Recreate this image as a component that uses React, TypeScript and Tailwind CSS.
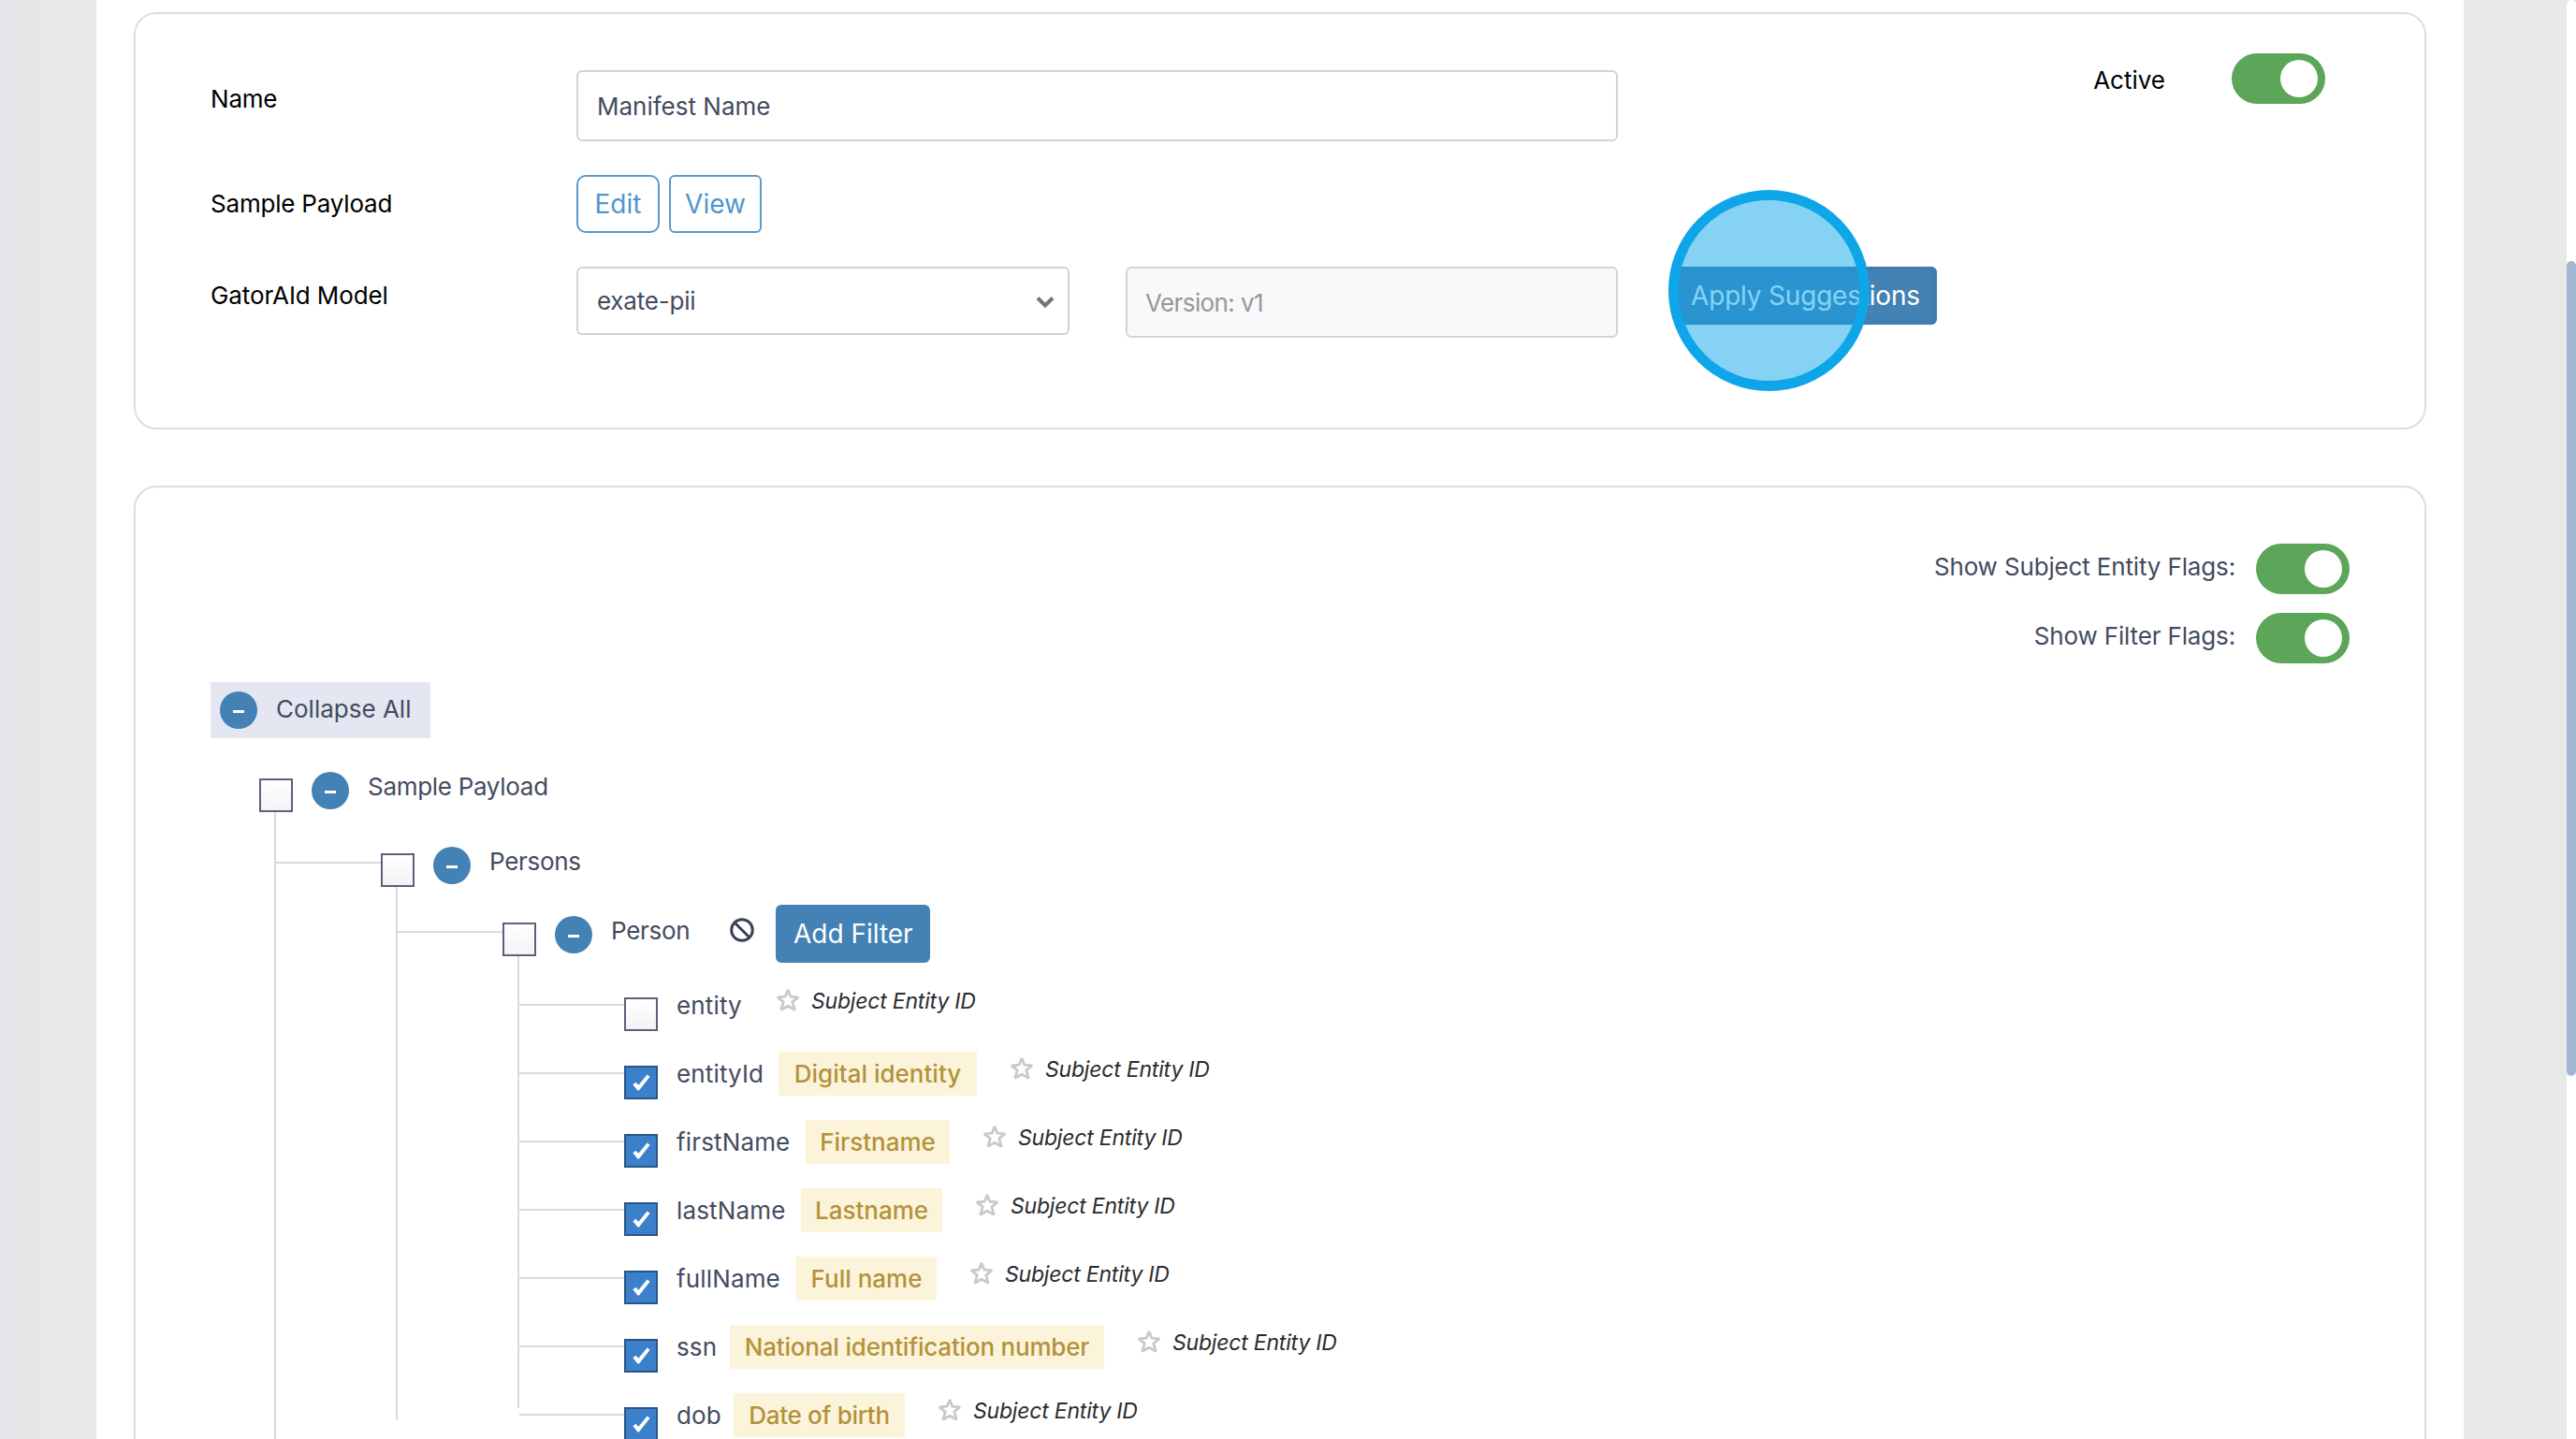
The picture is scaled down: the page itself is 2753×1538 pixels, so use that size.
import { useState, type ReactNode } from "react";

type Leaf = {
  name: string;
  nameWidth: string;
  tag?: string;
  tagWidth?: string;
};

const leaves: Leaf[] = [
  { name: "entity", nameWidth: "w-[106px]" },
  { name: "entityId", nameWidth: "w-[109px]", tag: "Digital identity", tagWidth: "w-[212px]" },
  { name: "firstName", nameWidth: "w-[138px]", tag: "Firstname", tagWidth: "w-[154px]" },
  { name: "lastName", nameWidth: "w-[133px]", tag: "Lastname", tagWidth: "w-[151px]" },
  { name: "fullName", nameWidth: "w-[128px]", tag: "Full name", tagWidth: "w-[150px]" },
  {
    name: "ssn",
    nameWidth: "w-[57px]",
    tag: "National identification number",
    tagWidth: "w-[400px] tracking-[-0.2px]",
  },
  {
    name: "dob",
    nameWidth: "w-[61px]",
    tag: "Date of birth",
    tagWidth: "w-[183px] tracking-[-0.3px]",
  },
];

function Toggle() {
  const [on, setOn] = useState(true);
  return (
    <button
      role="switch"
      aria-checked={on}
      onClick={() => setOn(!on)}
      className={`flex h-[54px] w-[100px] shrink-0 items-center rounded-full px-2 ${
        on ? "justify-end bg-[#5ba659]" : "justify-start bg-gray-300"
      }`}
    >
      <span className="size-10 rounded-full bg-white" />
    </button>
  );
}

function Checkbox({ checked = false }: { checked?: boolean }) {
  return (
    <span
      className={`mt-[7px] flex size-9 shrink-0 items-center justify-center border-2 ${
        checked
          ? "border-[#2a5585] bg-[#3b80cb]"
          : "border-[#5b617a] bg-linear-to-b from-white to-[#f3f3f5]"
      }`}
    >
      {checked && (
        <svg viewBox="0 0 19 18" className="h-[18px] w-[19px]" fill="#fff">
          <path d="M0.4 11.2 L3.4 8.8 L6.4 11.8 L15.6 0.4 L18.6 2.8 L7 17.4 L5.4 17.4 Z" />
        </svg>
      )}
    </span>
  );
}

function Minus() {
  return (
    <span className="flex size-10 shrink-0 items-center justify-center rounded-full bg-[#4482b5]">
      <span className="mt-0.5 h-[3px] w-3 bg-white" />
    </span>
  );
}

function Star() {
  return (
    <svg
      viewBox="0 0 26 25"
      className="-mt-[3px] h-[25px] w-[26px] shrink-0"
      fill="none"
      stroke="#c9c9c9"
      strokeWidth="2.8"
      strokeLinejoin="bevel"
    >
      <path d="M13 2 L15.9 9.2 L24 9.8 L17.7 14.9 L20.3 23.4 L13 19.2 L5.7 23.4 L8.3 14.9 L2 9.8 L10.1 9.2 Z" />
    </svg>
  );
}

function Branch({ label, children }: { label: string; children?: ReactNode }) {
  return (
    <div className="flex h-[43px] items-start">
      <Checkbox />
      <span className="ml-5">
        <Minus />
      </span>
      <span className="ml-5 leading-[31px] tracking-[-0.3px] whitespace-nowrap">{label}</span>
      {children}
    </div>
  );
}

function LeafRow({ leaf }: { leaf: Leaf }) {
  return (
    <div className="flex h-[43px] items-start whitespace-nowrap">
      <span className="mt-3.5 h-0.5 w-28 shrink-0 bg-[#d9dadb]" />
      <Checkbox checked={!!leaf.tag} />
      <span className={`ml-5 shrink-0 leading-[31px] tracking-[0.15px] ${leaf.nameWidth}`}>
        {leaf.name}
      </span>
      {leaf.tag && (
        <span
          className={`-mt-2 mr-[35px] flex h-[47px] shrink-0 items-center justify-center bg-[#fcf4da] font-medium text-[#b3923b] ${leaf.tagWidth}`}
        >
          {leaf.tag}
        </span>
      )}
      <Star />
      <span className="ml-3 text-[23px] leading-[23px] tracking-[-0.2px] text-[#2b2b2e] italic">
        Subject Entity ID
      </span>
    </div>
  );
}

function ManifestForm() {
  return (
    <section className="flex h-[446px] shrink-0 items-start justify-between rounded-3xl border-2 border-[#dcdfe2] pr-[106px] pl-20">
      <div className="mt-[60px] grid grid-cols-[391px_1fr] gap-y-9">
        <label className="h-[61px] leading-[61px] tracking-[-0.2px] text-black">Name</label>
        <div className="flex h-[76px] w-[1113px] items-center rounded-md border-2 border-[#ced4da] px-5">
          Manifest Name
        </div>

        <label className="h-[61px] leading-[61px] tracking-[-0.2px] text-black">Sample Payload</label>
        <div className="flex h-[62px] gap-2.5 text-[28px] text-[#4f96cc]">
          <button className="w-[89px] rounded-[10px] border-2 border-[#5a9bcb]">Edit</button>
          <button className="w-[99px] rounded-md border-2 border-[#5a9bcb]">View</button>
        </div>

        <label className="h-[61px] leading-[61px] tracking-[-0.1px] text-black">GatorAId Model</label>
        <div className="flex h-[76px] items-start">
          <div className="flex h-[73px] w-[527px] items-center justify-between rounded-md border-2 border-[#ced4da] pr-3.5 pl-5 tracking-[-0.2px]">
            exate-pii
            <svg viewBox="0 0 20 14" className="mt-0.5 h-3.5 w-5" fill="none" stroke="#757575" strokeWidth="4">
              <path d="M2 2.5 L10 10.5 L18 2.5" />
            </svg>
          </div>
          <div className="ml-[60px] flex h-[76px] w-[526px] items-center rounded-md border-2 border-[#ced4da] bg-[#f7f9fb] px-[19px] tracking-[-0.6px] text-[#979797]">
            Version: v1
          </div>
          <div className="relative ml-[60px]">
            <button className="h-[62px] w-[281px] rounded-md bg-[#4482b5] text-[28px] tracking-[-0.2px] whitespace-nowrap text-white shadow-[inset_0_0_10px_rgba(60,100,150,0.5)]">
              Apply Suggestions
            </button>
            {/* click highlight over the button */}
            <span className="absolute -top-[82px] -left-1.5 size-[215px] rounded-full border-[11px] border-[#0fa6e9] bg-[#0ea5e9]/50 bg-clip-padding" />
          </div>
        </div>
      </div>

      <div className="mt-[42px] flex items-center gap-[71px]">
        <span className="mt-[3px] text-black">Active</span>
        <Toggle />
      </div>
    </section>
  );
}

function PayloadTree() {
  return (
    <div className="mt-9 ml-[52px]">
      <Branch label="Sample Payload" />
      <div className="relative ml-4 h-[700px] pt-[37px]">
        <span className="absolute top-0 left-0 h-full w-0.5 bg-[#d9dadb]" />
        <div className="flex items-start">
          <span className="mt-4 h-0.5 w-[114px] shrink-0 bg-[#d9dadb]" />
          <Branch label="Persons" />
        </div>
        <div className="relative ml-[130px] pt-[31px]">
          <span className="absolute top-0 left-0 h-[570px] w-0.5 bg-[#d9dadb]" />
          <div className="flex items-start">
            <span className="mt-4 h-0.5 w-[114px] shrink-0 bg-[#d9dadb]" />
            <Branch label="Person">
              <svg
                viewBox="0 0 26 26"
                className="mt-0.5 ml-[43px] size-[26px] shrink-0"
                fill="none"
                stroke="#3a4156"
                strokeWidth="3"
              >
                <circle cx="13" cy="13" r="11.3" />
                <path d="M5 5 L21 21" />
              </svg>
              <button className="-mt-3 ml-[23px] h-[62px] w-[165px] shrink-0 rounded-md bg-[#4482b5] text-[28px] text-white">
                Add Filter
              </button>
            </Branch>
          </div>
          <div className="relative ml-[130px] flex flex-col gap-[30px] pt-[37px] pl-0.5">
            <span className="absolute top-0 left-0 h-[483px] w-0.5 bg-[#d9dadb]" />
            {leaves.map((leaf) => (
              <LeafRow key={leaf.name} leaf={leaf} />
            ))}
          </div>
        </div>
      </div>
    </div>
  );
}

export default function App() {
  return (
    <div className="flex h-[1538px] w-[2753px] overflow-hidden bg-[#e8e8e8] font-[Inter,'Liberation_Sans',sans-serif] text-[26px] text-[#434b60]">
      <div className="w-[103px] shrink-0 bg-linear-to-r from-[#e4e5e8] to-[#e8e8e8] to-60%" />
      <main className="flex w-[2530px] shrink-0 flex-col gap-[60px] bg-white px-10 pt-[13px]">
        <ManifestForm />
        <section className="h-[1100px] shrink-0 rounded-t-3xl border-2 border-[#dcdfe2] px-20 pt-[60px]">
          <div className="flex flex-col items-end gap-5">
            <div className="flex items-center gap-[22px]">
              <span className="-mt-1.5 tracking-[-0.15px]">Show Subject Entity Flags:</span>
              <Toggle />
            </div>
            <div className="flex items-center gap-[22px]">
              <span className="-mt-1.5 tracking-[-0.15px]">Show Filter Flags:</span>
              <Toggle />
            </div>
          </div>
          <button className="mt-5 flex h-[60px] w-[235px] items-center gap-5 bg-[#e4e7f1] pl-2.5 whitespace-nowrap">
            <Minus />
            <span className="-mt-[3px]">Collapse All</span>
          </button>
          <PayloadTree />
        </section>
      </main>
      <div className="ml-auto w-2.5 rounded-t-full bg-white pt-[279px]">
        <div className="h-[871px] rounded-full bg-[#a1b6d0]" />
      </div>
    </div>
  );
}
